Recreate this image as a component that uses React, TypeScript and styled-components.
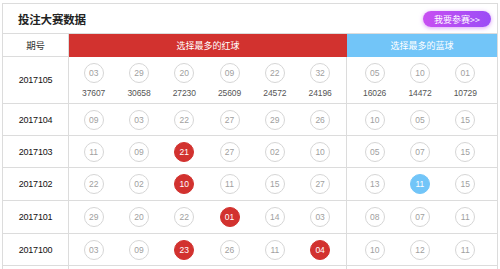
import styled, { createGlobalStyle } from 'styled-components';

const GlobalStyle = createGlobalStyle`
	body {
		margin: 0;
		background: #fff;
		font-family: 'Liberation Sans', 'Noto Sans CJK SC', sans-serif;
	}
`;

const Panel = styled.section`
	box-sizing: border-box;
	width: 496px;
	margin: 3px 2px 0;
	border: 1px solid #dcdcdc;
	border-bottom: none;
`;

const TitleBar = styled.div`
	height: 29px;
	display: flex;
	align-items: center;
	justify-content: space-between;
	padding: 0 6px 0 15px;
	border-bottom: 1px solid #dcdcdc;
	h2 {
		margin: 0;
		font-family: 'Noto Sans CJK SC', sans-serif;
		font-size: 11.5px;
		font-weight: 700;
		color: #222;
		letter-spacing: -0.2px;
	}
`;

const JoinButton = styled.a`
	width: 68px;
	height: 16px;
	border-radius: 8px;
	display: flex;
	align-items: center;
	justify-content: center;
	background: linear-gradient(90deg, #c84ff2, #9b4cf6);
	box-shadow: 0 1px 4px rgba(190, 80, 240, 0.55);
	color: #fff;
	font-family: 'Noto Sans CJK SC', sans-serif;
	font-size: 9px;
	text-decoration: none;
	margin-top: 1px;
`;

const Row = styled.div<{ $height: number }>`
	display: grid;
	grid-template-columns: 66px 278px 1fr;
	height: ${(p) => p.$height}px;
`;

const Cell = styled.div`
	box-sizing: border-box;
	border-bottom: 1px solid #dcdcdc;
	display: flex;
	align-items: center;
`;

const DateCell = styled(Cell)`
	border-right: 1px solid #dcdcdc;
	justify-content: center;
	font-size: 9px;
	color: #111;
	letter-spacing: -0.2px;
`;

const HeadCell = styled(Cell)<{ $tone: 'red' | 'blue' }>`
	justify-content: center;
	border-bottom: none;
	background: ${(p) => (p.$tone === 'red' ? '#d2322f' : '#72c5f8')};
	color: #fff;
	font-family: 'Noto Sans CJK SC', sans-serif;
	font-size: 9px;
`;

const HeadDate = styled(DateCell)`
	font-family: 'Noto Sans CJK SC', sans-serif;
	font-size: 9.5px;
	color: #333;
`;

const BallGroup = styled(Cell)<{ $cols: number; $pad: number; $divider?: boolean }>`
	display: grid;
	grid-template-columns: repeat(${(p) => p.$cols}, 45.3px);
	align-items: center;
	padding-left: ${(p) => p.$pad}px;
	border-right: ${(p) => (p.$divider ? '1px solid #dcdcdc' : 'none')};
`;

const BallSlot = styled.div`
	display: flex;
	flex-direction: column;
	align-items: center;
	gap: 5px;
`;

const Ball = styled.span<{ $hit?: 'red' | 'blue' }>`
	box-sizing: border-box;
	width: 20px;
	height: 20px;
	border-radius: 50%;
	display: flex;
	align-items: center;
	justify-content: center;
	font-size: 8.5px;
	border: 1px solid ${(p) => (p.$hit === 'red' ? '#d2322f' : p.$hit === 'blue' ? '#72c5f8' : '#d6d6d6')};
	background: ${(p) => (p.$hit === 'red' ? '#d2322f' : p.$hit === 'blue' ? '#72c5f8' : '#fff')};
	color: ${(p) => (p.$hit ? '#fff' : '#a0a0a0')};
`;

const Count = styled.span`
	font-size: 8.5px;
	color: #555;
	letter-spacing: -0.1px;
`;

type Pick = { n: string; c?: string; hit?: 'red' | 'blue' };
type Draw = { date: string; red: Pick[]; blue: Pick[]; height: number };

const p = (list: string, hits: Record<string, 'red' | 'blue'> = {}, counts: string[] = []): Pick[] =>
	list.split(' ').map((n, i) => ({ n, c: counts[i], hit: hits[i] }));

const draws: Draw[] = [
	{
		date: '2017105',
		red: p('03 29 20 09 22 32', {}, ['37607', '30658', '27230', '25609', '24572', '24196']),
		blue: p('05 10 01', {}, ['16026', '14472', '10729']),
		height: 47,
	},
	{ date: '2017104', red: p('09 03 22 27 29 26'), blue: p('10 05 15'), height: 32 },
	{ date: '2017103', red: p('11 09 21 27 02 10', { 2: 'red' }), blue: p('05 07 15'), height: 32 },
	{ date: '2017102', red: p('22 02 10 11 15 27', { 2: 'red' }), blue: p('13 11 15', { 1: 'blue' }), height: 33 },
	{ date: '2017101', red: p('29 20 22 01 14 03', { 3: 'red' }), blue: p('08 07 11'), height: 33 },
	{ date: '2017100', red: p('03 09 23 26 11 04', { 2: 'red', 5: 'red' }), blue: p('10 12 11'), height: 32 },
];

function Balls({ picks }: { picks: Pick[] }) {
	return (
		<>
			{picks.map((b, i) => (
				<BallSlot key={i}>
					<Ball $hit={b.hit}>{b.n}</Ball>
					{b.c && <Count>{b.c}</Count>}
				</BallSlot>
			))}
		</>
	);
}

export default function App() {
	return (
		<>
			<GlobalStyle />
			<Panel>
				<TitleBar>
					<h2>投注大赛数据</h2>
					<JoinButton href="#">我要参赛&gt;&gt;</JoinButton>
				</TitleBar>
				<Row $height={23}>
					<HeadDate>期号</HeadDate>
					<HeadCell $tone="red">选择最多的红球</HeadCell>
					<HeadCell $tone="blue">选择最多的蓝球</HeadCell>
				</Row>
				{draws.map((d) => (
					<Row key={d.date} $height={d.height}>
						<DateCell>{d.date}</DateCell>
						<BallGroup $cols={6} $pad={2} $divider>
							<Balls picks={d.red} />
						</BallGroup>
						<BallGroup $cols={3} $pad={5}>
							<Balls picks={d.blue} />
						</BallGroup>
					</Row>
				))}
				{/* next draw, cut off by the frame in the reference */}
				<Row $height={32}>
					<DateCell />
					<BallGroup $cols={6} $pad={2} $divider />
					<BallGroup $cols={3} $pad={5} />
				</Row>
			</Panel>
		</>
	);
}
